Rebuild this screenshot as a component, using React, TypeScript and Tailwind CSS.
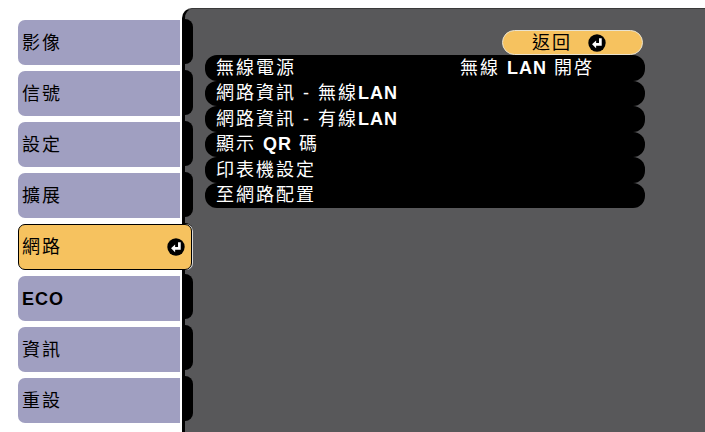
import React from "react";

type Row = {
    label: React.ReactNode,
    value?: React.ReactNode,
}

const tabs = ["影像", "信號", "設定", "擴展", "網路", "ECO", "資訊", "重設"];
const selectedTab = 4;

const rows: Row[] = [
    {label: "無線電源", value: <>無線 <b className="tracking-[1px]">LAN</b> 開啓</>},
    {label: <>網路資訊 - 無線<b className="tracking-[1px]">LAN</b></>},
    {label: <>網路資訊 - 有線<b className="tracking-[1px]">LAN</b></>},
    {label: <>顯示 <b className="tracking-[1px]">QR</b> 碼</>},
    {label: "印表機設定"},
    {label: "至網路配置"},
];

/**
 * Black round "enter" mark used on the selected tab and the back button
 */
const EnterIcon = () => (
    <svg width="18" height="18" viewBox="0 0 16 16">
        <circle cx="8" cy="8" r="7.7" fill="#000"/>
        <path d="M11 3.8 V9.2 H6.5" stroke="#fff" strokeWidth="2.4" fill="none"/>
        <path d="M3.6 9.2 L7.2 5.8 V12.6 Z" fill="#fff"/>
    </svg>
);

const App: React.FC = () => {
    return (
        <div
            className="flex h-[432px] w-[705px] overflow-hidden bg-white text-[18px] leading-none tracking-[2px]"
            style={{fontFamily: '"Liberation Sans", "Noto Sans CJK TC", sans-serif'}}
        >
            {/* left tabs */}
            <div className="flex w-[182px] shrink-0 flex-col gap-[6px] pl-[18px] pt-[20px]">
                {tabs.map((tab, index) => index === selectedTab ? (
                    <div
                        key={tab}
                        className="relative z-10 flex h-[46px] w-[174px] items-center justify-between rounded-[7px] border border-black bg-[#f6c25f] pl-[3px] pr-[6px] text-black shadow-[1px_0_0_#d8d8d8]"
                    >
                        <span>{tab}</span>
                        <EnterIcon/>
                    </div>
                ) : (
                    <div
                        key={tab}
                        className={`flex h-[45px] w-[162px] items-center rounded-l-[7px] bg-[#a09fc1] pl-[4px] text-black ${tab === "ECO" ? "font-bold tracking-[1px]" : ""}`}
                    >
                        {tab}
                    </div>
                ))}
            </div>

            {/* main panel */}
            <div className="mt-[8px] flex flex-1 rounded-tl-[10px] border-l-[3px] border-t border-l-black border-t-[#3a3a3a] bg-[#58585a]">
                <div className="flex w-[8px] shrink-0 flex-col gap-[6px] pt-[10px]">
                    {tabs.map(tab => (
                        <div key={tab} className="h-[45px] rounded-r-[8px] bg-black"/>
                    ))}
                </div>

                <div className="ml-[12px] flex w-[440px] flex-col pt-[21px]">
                    <div className="flex justify-end pr-[2px]">
                        <div className="flex h-[25px] w-[141px] items-center rounded-full border border-[#e9e2cf] bg-[#f6c25f] pl-[29px] text-black">
                            <span className="mr-[16px]">返回</span>
                            <EnterIcon/>
                        </div>
                    </div>
                    <div className="flex flex-col">
                        {rows.map((row, index) => (
                            <div
                                key={index}
                                className="flex h-[25.5px] items-center rounded-[12px] bg-black pl-[11px] text-white"
                            >
                                <span className="w-[244px] whitespace-nowrap">{row.label}</span>
                                {row.value && <span className="whitespace-nowrap">{row.value}</span>}
                            </div>
                        ))}
                    </div>
                </div>
            </div>
        </div>
    );
};

export default App;
